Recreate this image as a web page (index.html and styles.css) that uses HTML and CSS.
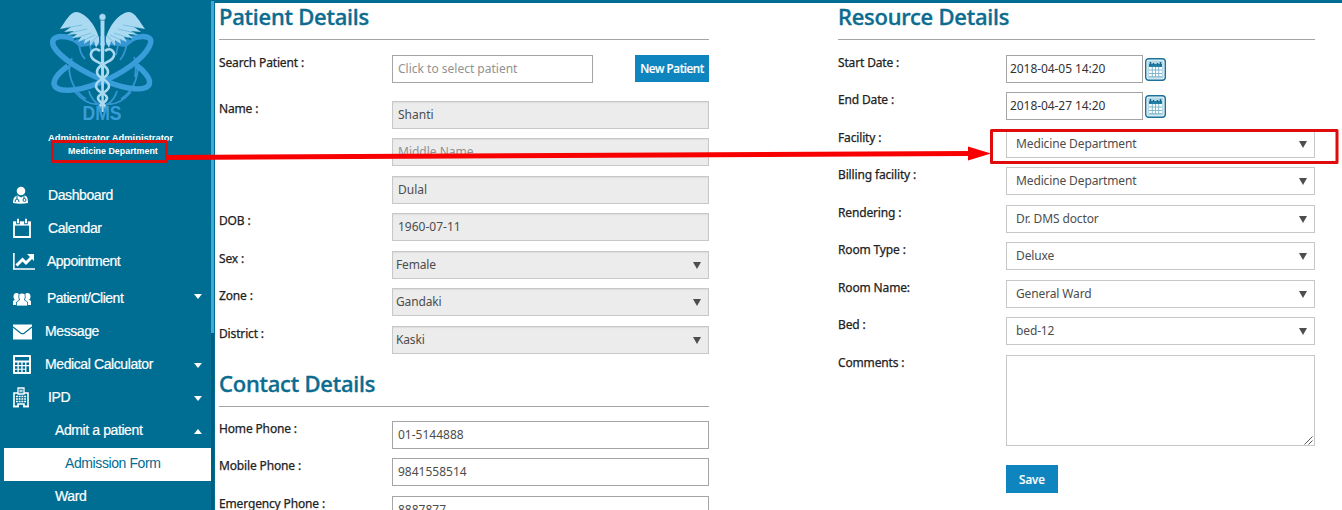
FILE: index.html
```html
<!DOCTYPE html>
<html lang="en">
<head>
<meta charset="utf-8">
<title>Admission Form</title>
<link rel="stylesheet" href="styles.css">
</head>
<body>
<div class="app">
  <aside class="sidebar">
    <svg class="logo" viewBox="0 0 120 120" width="120" height="120">
      <g fill="none" stroke="#3596d3" stroke-width="1.8">
        <path d="M24 60c0 16 7 28 17 34M93 60c0 16-7 28-17 34M27 53q-2 5-2 10M89 52q3 6 1 20M34 36q0 12 6 18M45 40l2 10M82 36q-1 12-7 19M73 40l-2 10M30 87q12 14 25 12M86 87q-12 14-25 12M44 86q2 8 9 13M72 86q-2 8-9 13"/>
        <path d="M27 36q30-10 62 0l-8 6q-23-4-46 0z" fill="#3596d3" stroke="none"/>
      </g>
      <g fill="none" stroke="#399dd9" stroke-width="5.5">
        <path d="M29 34C14 29 4 32 9 42c6 10 27 25 54 35 20 8 37 9 41 3 3-6-6-15-13-20"/>
        <path d="M86 34c15-5 24-2 18 8-6 12-27 27-50 36C31 87 11 88 9 79c0-7 7-13 14-18"/>
      </g>
      <g fill="#a9daf1">
        <path d="M56 42C54 25 43 8 31 7 25 7 20 17 15 24l11-2-7 5 10-1-7 4 10-1-5 4 9-1-3 5 7-3-1 5 6-4 0 6 4-5 2 7 3-6z"/>
        <path d="M59 42C61 25 72 8 84 7c6 0 11 10 16 17l-11-2 7 5-10-1 7 4-10-1 5 4-9-1 3 5-7-3 1 5-6-4 0 6-4-5-2 7-3-6z"/>
      </g>
      <g fill="none" stroke="#5eaed0" stroke-width=".6">
        <path d="M20 23l17-3M25 28l17-4M31 33l15-5M37 36l13-6M44 39l9-8M95 23l-17-3M90 28l-17-4M84 33l-15-5M78 36l-13-6M71 39l-9-8"/>
      </g>
      <path d="M55.500 15h4l-.8 92h-2.200z" fill="#a9daf1"/>
      <path d="M54.500 17v24M60.500 17v24" stroke="#006d93" stroke-width=".8"/>
      <circle cx="57.500" cy="12" r="3.500" fill="#a9daf1" stroke="#006d93" stroke-width=".6"/>
      <g fill="none" stroke="#a9daf1" stroke-width="2.600">
        <path d="M55 46c-5-5-13 2-7 8 4 4 15 6 15 13s-12 7-12 14 11 7 11 12-8 5-8 11"/>
        <path d="M60 46c5-5 13 2 7 8-4 4-15 6-15 13s12 7 12 14-11 7-11 12 8 5 8 11"/>
      </g>
      <text class="logo-text" x="37.500" y="114.500" textLength="39" lengthAdjust="spacingAndGlyphs">DMS</text>
    </svg>
    <div class="user-name">Administrator Administrator</div>
    <div class="user-dept">Medicine Department</div>

    <nav class="menu">
      <a class="item"><svg class="icon" viewBox="0 0 22 22"><circle cx="8" cy="6" r="4.300" fill="#fff"/><path d="M0 18c0-5 2-7 4.500-7.500L8 12.500l3.500-2C14 11 15 13 15 18q-7 1.500-15 0z" fill="#fff"/><path d="M4 11v3m0 0q-2 0-2 3m2-3q2 0 2 3M11 11v3" stroke="#006d93" fill="none"/><circle cx="11.500" cy="15" r="1.500" fill="none" stroke="#006d93"/></svg><span class="t48">Dashboard</span></a>
      <a class="item"><svg class="icon" viewBox="0 0 22 22"><path d="M1 4.500h16v14.500H1z" fill="none" stroke="#fff" stroke-width="1.800"/><path d="M.1 3.600h17.800v4H.1z" fill="#fff"/><path d="M5 .8v5.400M13 .8v5.400" stroke="#006d93" stroke-width="3.600"/><path d="M5 .8v4.400M13 .8v4.400" stroke="#fff" stroke-width="2"/></svg><span class="t47">Calendar</span></a>
      <a class="item"><svg class="icon" viewBox="0 0 22 22"><path d="M.8 2v16H22" fill="none" stroke="#fff" stroke-width="1.700"/><path d="M3.500 14.500l6-6 3.500 3.500 6-6" fill="none" stroke="#fff" stroke-width="3"/><path d="M14 3h7v7z" fill="#fff"/></svg><span class="t46">Appointment</span></a>
      <a class="item gap"><svg class="icon" viewBox="0 0 22 22"><g fill="#fff"><ellipse cx="3.500" cy="8.500" rx="3" ry="3.500"/><ellipse cx="14.500" cy="8.500" rx="3" ry="3.500"/><path d="M0 17v-4l3-2h3v6zM18 17v-4l-3-2h-3v6z"/></g><path d="M3.500 18v-4l3-2Q4 5 9 5t2.500 7l3 2v4z" fill="#fff" stroke="#006d93" stroke-width=".8"/></svg><span class="t46">Patient/Client</span><i class="caret"></i></a>
      <a class="item"><svg class="icon" viewBox="0 0 22 22"><path d="M0 3.500h19v15H0z" fill="#fff"/><path d="M0 6l7.500 6q2 1.500 4 0L19 6" fill="none" stroke="#006d93" stroke-width="1.200"/></svg><span class="t45">Message</span></a>
      <a class="item"><svg class="icon" viewBox="0 0 22 22"><rect y="1" width="18" height="19" rx="1" fill="#fff"/><path d="M2 3h14v3.500H2zM2 8.500h2.500V11H2zm3.800 0h2.500V11H5.800zm3.800 0h2.500V11H9.600zm3.800 0H16V11h-2.600zM2 12.200h2.500v2.500H2zm3.800 0h2.500v2.500H5.800zm3.800 0h2.500v2.500H9.600zm3.800 0H16V18h-2.600zM2 15.800h2.500V18H2zm3.800 0h2.500V18H5.800zm3.800 0h2.500V18H9.600z" fill="#006d93"/></svg><span class="t45">Medical Calculator</span><i class="caret"></i></a>
      <a class="item"><svg class="icon" viewBox="0 0 22 22"><path d="M1 6h14v13.500h-4V17H5v2.500H1z" fill="none" stroke="#fff" stroke-width="1.600"/><path d="M5 1h6v6H5z" fill="#006d93" stroke="#fff" stroke-width="1.300"/><path d="M7 2.500v3M9 2.500v3M7 4h2" stroke="#fff" stroke-width=".9"/><path d="M3 9.500h10M3 12h10M3 14.500h10" stroke="#fff" stroke-width="1.500" stroke-dasharray="1.900 .8"/><path d="M0 19.500h6M10 19.500h6" stroke="#fff" stroke-width="1.500"/></svg><span class="t48">IPD</span><i class="caret"></i></a>
      <a class="item"><span class="t55">Admit a patient</span><i class="caret up"></i></a>
      <a class="item active"><span class="t65">Admission Form</span></a>
      <a class="item"><span class="t55">Ward</span></a>
    </nav>
  </aside>
  <div class="scroll"><div class="thumb"></div></div>

  <main class="content">
    <section class="patient">
      <h2 class="title">Patient Details</h2>
      <div class="row search"><label>Search Patient :</label><div class="box search-box hint">Click to select patient</div><button class="btn new">New Patient</button></div>
      <div class="row"><label>Name :</label><div class="box off">Shanti</div></div>
      <div class="row"><label></label><div class="box off hint">Middle Name</div></div>
      <div class="row"><label></label><div class="box off">Dulal</div></div>
      <div class="row"><label>DOB :</label><div class="box off">1960-07-11</div></div>
      <div class="row"><label>Sex :</label><div class="box off select">Female<i class="arrow"></i></div></div>
      <div class="row"><label>Zone :</label><div class="box off select">Gandaki<i class="arrow"></i></div></div>
      <div class="row"><label>District :</label><div class="box off select">Kaski<i class="arrow"></i></div></div>
      <h2 class="title second">Contact Details</h2>
      <div class="row"><label>Home Phone :</label><div class="box">01-5144888</div></div>
      <div class="row"><label>Mobile Phone :</label><div class="box">9841558514</div></div>
      <div class="row"><label>Emergency Phone :</label><div class="box">8887877</div></div>
    </section>

    <section class="resource">
      <h2 class="title">Resource Details</h2>
      <div class="row"><label>Start Date :</label><div class="box date">2018-04-05 14:20</div><svg class="cal" viewBox="0 0 21 23"><use href="#cal"/></svg></div>
      <div class="row"><label>End Date :</label><div class="box date">2018-04-27 14:20</div><svg class="cal" viewBox="0 0 21 23"><g id="cal"><rect x=".7" y=".7" width="19.600" height="21.600" rx="3" fill="#eaf6fa" stroke="#1b7197" stroke-width="1.400"/><rect x="2.500" y="2.500" width="16" height="18" rx="1" fill="#b4d8e8"/><path d="M4 7h13v12H4z" fill="#fff"/><path d="M4 6h13v3H4z" fill="#2580a8"/><path d="M5.500 4v4M8.500 5v2M12.500 5v2M15.500 4v4" stroke="#17668b" stroke-width="1.500"/><path d="M4 12h13M4 15.500h13M7.300 9v10M10.500 9v10M13.700 9v10M4 18.700h13" stroke="#83b8cf" stroke-width="1"/></g></svg></div>
      <div class="row"><label>Facility :</label><div class="box pick">Medicine Department<i class="arrow"></i></div></div>
      <div class="row"><label>Billing facility :</label><div class="box pick">Medicine Department<i class="arrow"></i></div></div>
      <div class="row"><label>Rendering :</label><div class="box pick">Dr. DMS doctor<i class="arrow"></i></div></div>
      <div class="row"><label>Room Type :</label><div class="box pick">Deluxe<i class="arrow"></i></div></div>
      <div class="row"><label>Room Name:</label><div class="box pick">General Ward<i class="arrow"></i></div></div>
      <div class="row"><label>Bed :</label><div class="box pick">bed-12<i class="arrow"></i></div></div>
      <div class="row comments"><label>Comments :</label><div class="box area"><svg class="grip" viewBox="0 0 9 9"><path d="M.5 8.500l8-8M4.500 8.500l4-4" stroke="#555" stroke-width="1"/></svg></div></div>
      <button class="btn save">Save</button>
    </section>
  </main>
</div>

<svg class="marks" viewBox="0 0 1342 510" width="1342" height="510">
  <g fill="none" stroke="#e00b0b" stroke-width="3" stroke-linejoin="round">
    <rect x="52.500" y="141.500" width="114" height="20"/>
    <rect x="991.500" y="130.500" width="345.500" height="32"/>
  </g>
  <path d="M168 157.500L970 153.500" stroke="#f80000" stroke-width="5"/>
  <path d="M968 146.500l23 7-23 7z" fill="#f80000"/>
</svg>
</body>
</html>
```
FILE: styles.css
```css
* { box-sizing: border-box; }
body {
  margin: 0;
  width: 1342px;
  height: 510px;
  overflow: hidden;
  background: #fff;
  font: 12px/16px "Noto Sans", sans-serif;
  color: #222;
}
.app { display: flex; height: 510px; overflow: hidden; }

.sidebar {
  width: 211px;
  flex: none;
  background: #006d93;
  color: #fff;
  font-family: "Liberation Sans", sans-serif;
  padding-top: 5px;
}
.logo { display: block; margin-left: 45px; }
.logo-text { font: bold 20px "Liberation Sans", sans-serif; fill: #399dd9; }
.user-name, .user-dept { font-weight: bold; line-height: 12px; white-space: nowrap; }
.user-name { margin-top: 7px; padding-left: 48px; font-size: 9.400px; }
.user-dept { margin-top: 1px; padding-left: 68px; font-size: 8.900px; }
.menu { margin-top: 23px; font-size: 14px; letter-spacing: -.35px; }
.item { display: flex; align-items: center; height: 33px; color: #fff; -webkit-text-stroke: .2px; }
.item span { padding-bottom: 3px; letter-spacing: -.4px; font-size: 14px; }
.item span.t46 { letter-spacing: -.5px; }
.item .t45, .item .t55 { letter-spacing: -.4px; }
.item.gap { margin-top: 4px; }
.icon { width: 22px; height: 22px; margin: -2px 0 0 13px; flex: none; }
.icon + .t48 { margin-left: 13px; }
.icon + .t47 { margin-left: 13px; }
.icon + .t46 { margin-left: 12px; }
.icon + .t45 { margin-left: 10px; }
.t55 { margin-left: 55px; }
.t65 { margin-left: 61px; }
.item.active { margin-left: 4px; background: #fff; color: #006d93; -webkit-text-stroke: 0; }
.caret {
  margin-left: auto;
  margin-right: 9px;
  border: 4.500px solid transparent;
  border-top: 5px solid #fff;
  border-bottom: 0;
}
.item.gap .caret { margin-top: -6px; }
.caret.up { border-top: 0; border-bottom: 5px solid #fff; }

.scroll { width: 4px; flex: none; background: #005f80; border-right: 1px solid #006d93; }
.thumb { height: 333px; width: 3px; background: #3eaad8; border-top: 1px solid #006d93; }

.content {
  flex: 1;
  display: flex;
  border-top: 3px solid #006d93;
  padding-left: 4px;
}
.patient { width: 490px; margin-right: 129px; }
.resource { width: 477px; }
.title {
  margin: 0 0 14.800px;
  height: 37px;
  border-bottom: 1px solid #a4a4a4;
  font-size: 22px;
  line-height: 27px;
  font-weight: 500;
  letter-spacing: -.22px;
  color: #0b6c8f;
  -webkit-text-stroke: .4px;
}
.title.second { margin: 6.700px 0 13.800px; }
.row { display: flex; height: 37.500px; }
.row.search { height: 46px; }
.row label { width: 173px; flex: none; letter-spacing: -.15px; -webkit-text-stroke: .25px; }
.resource .row label { width: 168px; }
.box {
  flex: 1;
  position: relative;
  height: 28px;
  border: 1px solid #a5a5a5;
  padding: 0 5px;
  line-height: 26px;
  color: #4d4d4d;
  background: #fff;
}
.box.off { background: #ececec; border-color: #c8c8c8; box-shadow: inset 0 1px 1px #ddd; }
.box.hint { color: #929292; }
.box.select { padding-left: 3px; letter-spacing: -.15px; }
.box.search-box { flex: none; width: 201px; }
.box.date { flex: none; width: 137px; padding-left: 3px; color: #333; letter-spacing: -.07px; }
.box.pick { padding-left: 9px; border-color: #c8c8c8; letter-spacing: -.13px; }
.arrow {
  position: absolute;
  right: 7px;
  top: 10px;
  border: 4px solid transparent;
  border-top: 7px solid #4d4d4d;
  border-bottom: 0;
}
.cal { width: 21px; height: 23px; margin: 3px 0 0 2px; }
.row.comments { height: 110px; }
.box.area { height: 91px; border-color: #c8c8c8; }
.grip { position: absolute; right: 1px; bottom: 0; width: 9px; height: 9px; }
.btn {
  border: 0;
  padding: 0;
  background: #0f85c0;
  color: #fff;
  font: 500 11.700px/26px "Noto Sans", sans-serif;
  -webkit-text-stroke: .2px;
}
.btn.new { width: 74px; height: 27px; margin-left: auto; letter-spacing: -.4px; }
.btn.save { width: 52px; height: 28px; margin-left: 168px; }
.marks { position: absolute; left: 0; top: 0; }
```
